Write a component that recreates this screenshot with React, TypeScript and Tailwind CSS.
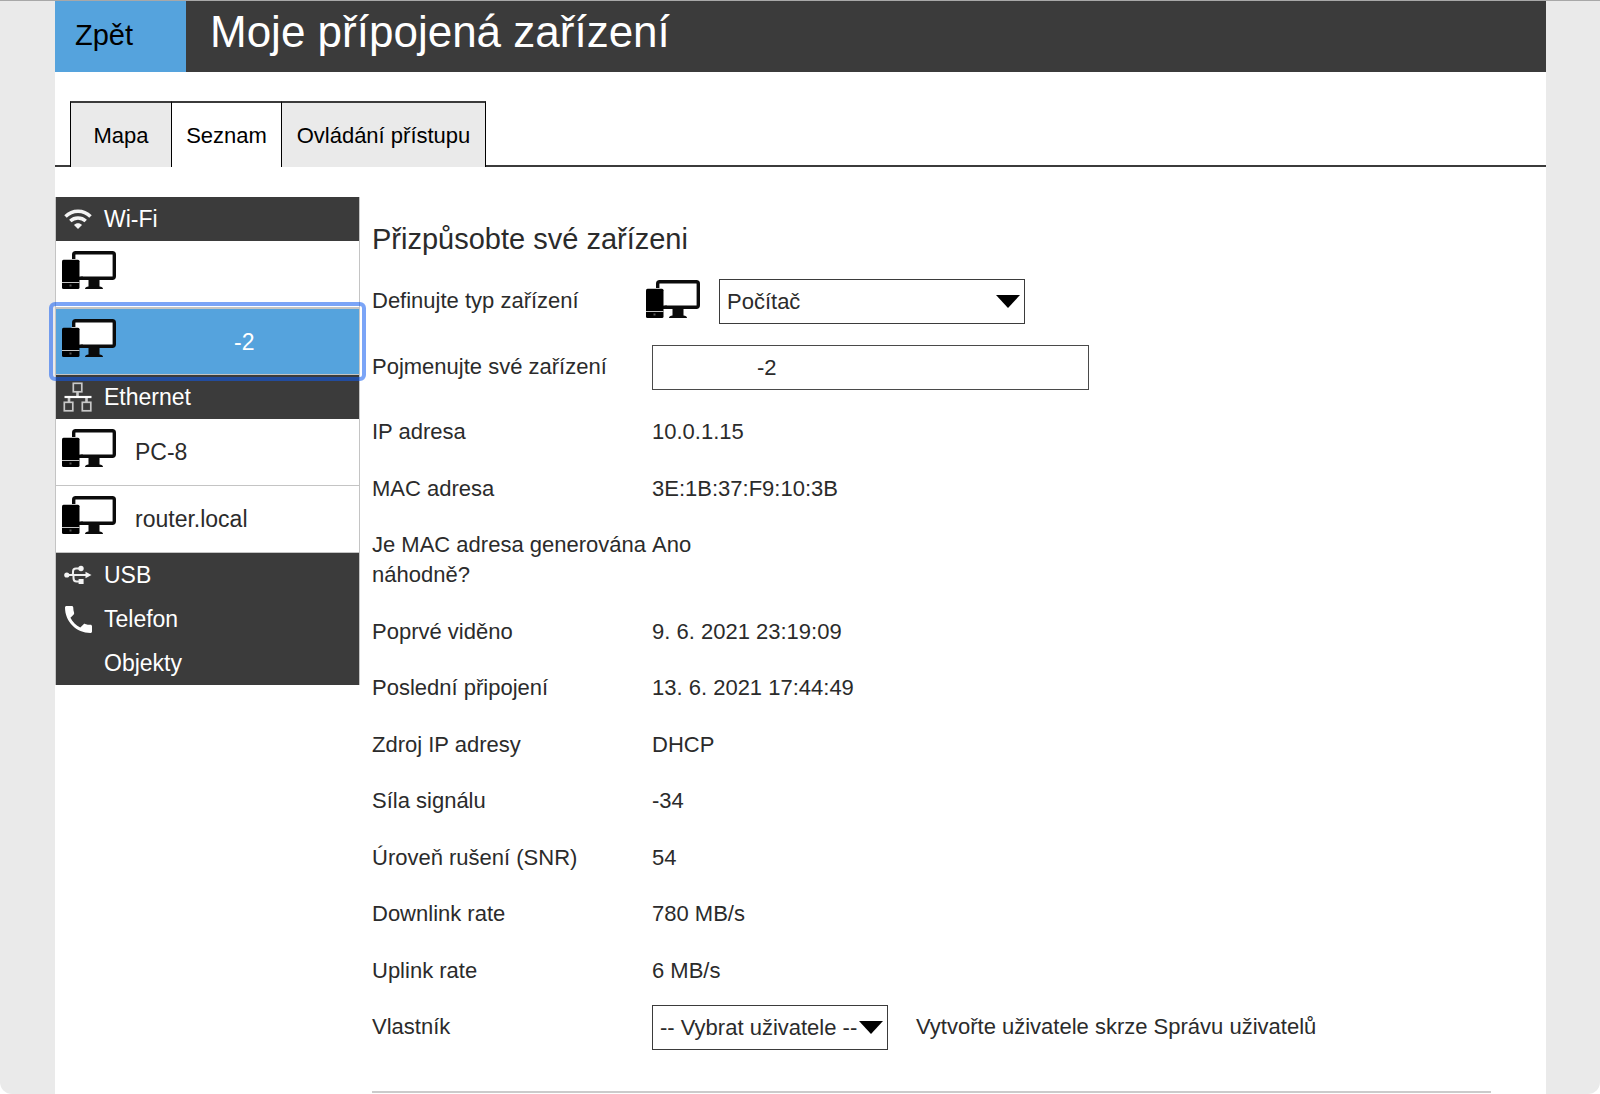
import React from "react";

function DeviceIcon() {
  return (
    <svg width="54" height="38" viewBox="0 0 54 38" aria-hidden="true" className="shrink-0">
      <rect x="11.7" y="1.7" width="40.600" height="25.600" rx="2" fill="#fff" stroke="#0b0b0b" strokeWidth="3.4" />
      <path d="M26.500 28h11v8h-11z" fill="#0b0b0b" />
      <path d="M23 38c0-1.500 1.500-2.500 3.500-2.500h11c2 0 3.500 1 3.500 2.500z" fill="#0b0b0b" />
      <path d="M9.500 8h9v20h-9z" fill="#fff" />
      <path d="M17 25.600h4v3.400h-4z" fill="#0b0b0b" />
      <rect x="0" y="8.700" width="17.500" height="29.300" rx="1.500" fill="#000" />
      <path d="M0 31.500h17.500" stroke="#c4c4c4" strokeWidth="1" />
      <rect x="7.500" y="33.500" width="2" height="2" fill="#555" />
    </svg>
  );
}

function WifiIcon() {
  return (
    <svg width="28" height="28" viewBox="0 0 28 28" fill="none" stroke="#f4f4f4" strokeWidth="3.500" aria-hidden="true">
      <path d="M1.500 11.500C8.500 4.500 19.500 4.500 26.500 11.500" />
      <path d="M6.300 16C10.700 12 17.300 12 21.700 16" />
      <path d="M10 20C12.200 17.800 15.800 17.800 18 20L14 24z" fill="#f4f4f4" stroke="none" />
    </svg>
  );
}

function EthernetIcon() {
  return (
    <svg width="30" height="30" viewBox="0 0 30 30" fill="none" stroke="#c8c8c8" strokeWidth="1.700" className="shrink-0" aria-hidden="true">
      <rect x="10.300" y="1.300" width="8.500" height="8.500" />
      <rect x="1.300" y="20.300" width="8.500" height="8.500" />
      <rect x="19.300" y="20.300" width="8.500" height="8.500" />
      <path d="M14.500 10v5M6 20v-4.500M23.500 20v-4.500" strokeWidth="2.600" />
      <path d="M1.500 15h27" stroke="#fff" strokeWidth="2.200" />
    </svg>
  );
}

function UsbIcon() {
  return (
    <svg width="28" height="28" viewBox="0 0 28 28" fill="none" stroke="#efefef" strokeWidth="2" aria-hidden="true">
      <path d="M3 14h20" />
      <path d="M6.500 14c3 0 2.500-1.500 2.500-3.500s1-3 3-3h4M9.500 14v3c0 2 1 3.500 3 3.500h4" />
      <circle cx="2.800" cy="14" r="2.600" fill="#f4f4f4" stroke="none" />
      <circle cx="17" cy="7.500" r="2.700" fill="#f4f4f4" stroke="none" />
      <rect x="14.600" y="18" width="5" height="5" fill="#f4f4f4" stroke="none" />
      <path d="M21.500 10.800L27.500 14l-6 3.200z" fill="#f4f4f4" stroke="none" />
    </svg>
  );
}

function PhoneIcon() {
  return (
    <svg width="27" height="27" viewBox="3 3 18 18" fill="#fff" aria-hidden="true">
      <path d="M6.620 10.790c1.440 2.830 3.760 5.140 6.590 6.590l2.200-2.200c.27-.27.67-.36 1.020-.24 1.120.37 2.330.57 3.570.57.55 0 1 .45 1 1V20c0 .55-.45 1-1 1-9.390 0-17-7.610-17-17 0-.55.45-1 1-1h3.500c.55 0 1 .45 1 1 0 1.250.2 2.450.57 3.570.11.35.03.74-.25 1.020z" />
    </svg>
  );
}

function GroupHeader({ label, icon }: { label: string; icon?: React.ReactNode }) {
  return (
    <h2 className="flex h-11 items-center gap-3 bg-[#3b3b3b] pl-2 text-white">
      <span className="flex w-7 shrink-0 justify-center">{icon}</span>
      {label}
    </h2>
  );
}

function DeviceRow({ name, selected }: { name: string; selected?: boolean }) {
  return (
    <button
      type="button"
      aria-label={name || "Zařízení"}
      aria-pressed={!!selected}
      className={
        selected
          ? "relative flex h-[67px] w-full gap-[19px] border-y border-[#c4c4c4] bg-[#55a3dd] pt-[10px] pl-[6px] text-left text-white before:absolute before:-inset-x-[7px] before:-inset-y-[7px] before:rounded-md before:border-4 before:border-[#0f5bf0]/55"
          : "flex h-[67px] w-full gap-[19px] border-b border-[#c4c4c4] bg-white pt-[10px] pl-[6px] text-left"
      }
    >
      <DeviceIcon />
      <span className={selected ? "pt-2 pl-[99px]" : "pt-2"}>{name}</span>
    </button>
  );
}

function Dropdown({ id, value, className }: { id: string; value: string; className: string }) {
  return (
    <span className={className}>
      <select
        id={id}
        defaultValue={value}
        className="h-[45px] w-full appearance-none border border-[#3b3b3b] bg-white pl-[7px] text-[22px] text-[#2b2b2b]"
      >
        <option>{value}</option>
      </select>
      <svg width="24" height="13" viewBox="0 0 24 13" aria-hidden="true" className="pointer-events-none absolute top-4 right-[5px]">
        <path d="M0 0h24L12 13z" fill="#000" />
      </svg>
    </span>
  );
}

const details = [
  ["IP adresa", "10.0.1.15"],
  ["MAC adresa", "3E:1B:37:F9:10:3B"],
  ["Je MAC adresa generována náhodně?", "Ano"],
  ["Poprvé viděno", "9. 6. 2021 23:19:09"],
  ["Poslední připojení", "13. 6. 2021 17:44:49"],
  ["Zdroj IP adresy", "DHCP"],
  ["Síla signálu", "-34"],
  ["Úroveň rušení (SNR)", "54"],
  ["Downlink rate", "780 MB/s"],
  ["Uplink rate", "6 MB/s"],
];

export default function App() {
  return (
    <div className="bg-white font-['Liberation_Sans',Arial,sans-serif] text-[22px] leading-[30px] text-[#2b2b2b]">
      <div className="min-h-screen rounded-b-xl border-t border-[#a8a8a8] bg-[#eaeaea] pr-[54px] pl-[55px]">
        <div className="flex min-h-[1093px] flex-col bg-white">
          <header className="flex h-[71px] bg-[#3b3b3b]">
            <button type="button" className="w-[131px] bg-[#55a3dd] pb-1 pl-5 text-left text-[29px] text-black">
              Zpět
            </button>
            <h1 className="pt-[7px] pl-6 text-[44px] leading-[48px] text-white">Moje přípojená zařízení</h1>
          </header>

          <nav className="mt-[29px] flex text-black">
            <span className="w-[15px] border-b-2 border-[#3b3b3b]" />
            <a href="#mapa" className="flex h-[66px] w-[101px] items-center justify-center border-t-2 border-l border-t-[#3b3b3b] border-l-black bg-[#eaeaea] pt-[2px]">
              Mapa
            </a>
            <a href="#seznam" aria-current="page" className="flex h-[66px] w-[110px] items-center justify-center border-t-2 border-l border-t-[#3b3b3b] border-l-black bg-white pt-[2px]">
              Seznam
            </a>
            <a href="#pristup" className="flex h-[66px] w-[205px] items-center justify-center border-x border-t-2 border-x-black border-t-[#3b3b3b] bg-[#eaeaea] pt-[2px]">
              Ovládání přístupu
            </a>
            <span className="flex-1 border-b-2 border-[#3b3b3b]" />
          </nav>

          <div className="flex items-start pt-[30px]">
            <aside className="w-[305px] shrink-0 border-x border-[#c4c4c4] text-[23px]">
              <GroupHeader label="Wi-Fi" icon={<WifiIcon />} />
              <DeviceRow name="" />
              <DeviceRow name="-2" selected />
              <GroupHeader label="Ethernet" icon={<EthernetIcon />} />
              <DeviceRow name="PC-8" />
              <DeviceRow name="router.local" />
              <GroupHeader label="USB" icon={<UsbIcon />} />
              <GroupHeader label="Telefon" icon={<PhoneIcon />} />
              <GroupHeader label="Objekty" />
            </aside>

            <main className="mr-[55px] ml-3 flex-1 border-b-2 border-[#cbcbcb] pb-[41px]">
              <h2 className="pt-[26px] text-[29px] leading-8">Přizpůsobte své zařízeni</h2>

              <div className="mt-6 flex h-[45px]">
                <label htmlFor="type" className="w-[274px] pt-[7px]">
                  Definujte typ zařízení
                </label>
                <span className="pt-px">
                  <DeviceIcon />
                </span>
                <Dropdown id="type" value="Počítač" className="relative ml-[19px] w-[306px]" />
              </div>

              <div className="mt-[21px] flex h-[45px]">
                <label htmlFor="name" className="w-[280px] pt-[7px]">
                  Pojmenujte své zařízení
                </label>
                <input id="name" defaultValue="-2" className="h-[45px] w-[437px] border border-[#4a4a4a] bg-white pl-[104px]" />
              </div>

              <dl className="mt-[27px] grid min-h-[569px] content-between gap-y-[26px]">
                {details.map(([label, value]) => (
                  <div key={label} className="flex">
                    <dt className="w-[280px]">{label}</dt>
                    <dd>{value}</dd>
                  </div>
                ))}
              </dl>

              <div className="mt-[19px] flex h-[45px]">
                <label htmlFor="owner" className="w-[280px] pt-[7px]">
                  Vlastník
                </label>
                <Dropdown id="owner" value="-- Vybrat uživatele --" className="relative w-[236px]" />
                <a href="#uzivatele" className="ml-7 pt-[7px]">
                  Vytvořte uživatele skrze Správu uživatelů
                </a>
              </div>
            </main>
          </div>
        </div>
      </div>
    </div>
  );
}
